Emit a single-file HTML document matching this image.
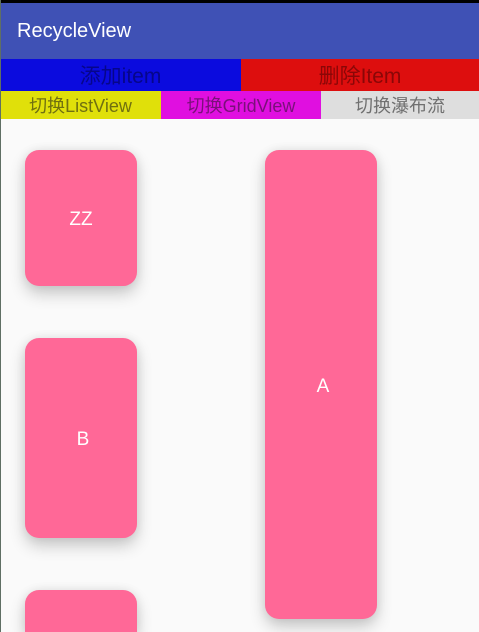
<!DOCTYPE html>
<html><head><meta charset="utf-8"><style>
*{margin:0;padding:0;box-sizing:border-box}
html{width:479px;height:632px;overflow:hidden}
body{width:479px;height:632px;overflow:hidden;background:#FAFAFA;position:relative;font-family:"Liberation Sans","Noto Sans CJK SC",sans-serif}
.a{position:absolute}
.c{position:absolute;background:#FF6897;border-radius:14px;box-shadow:0 8px 16px rgba(0,0,0,0.2),0 0 10px rgba(0,0,0,0.08);color:#fff;font-size:19px;display:flex;align-items:center;justify-content:center;padding-top:4px}
.b{position:absolute;display:flex;align-items:center;justify-content:center}
</style></head><body>
<div class="a" style="left:0;top:0;width:479px;height:3px;background:#000"></div>
<div class="a" style="left:0;top:3px;width:479px;height:56px;background:#3F51B5;box-shadow:0 2px 3px rgba(0,0,0,0.3)"></div>
<div class="a" style="left:17px;top:20px;color:#fff;font-size:20px">RecycleView</div>
<div class="b" style="left:0;top:59px;width:241px;height:32px;background:#0B0BDE;color:#06068a;font-size:21px">添加item</div>
<div class="b" style="left:241px;top:59px;width:238px;height:32px;background:#DD0E0E;color:#8a0707;font-size:21px">删除Item</div>
<div class="b" style="left:0;top:91px;width:161px;height:28px;background:#E0E00A;color:#707010;font-size:18px">切换ListView</div>
<div class="b" style="left:161px;top:91px;width:160px;height:28px;background:#E00FE0;color:#7a107a;font-size:18px">切换GridView</div>
<div class="b" style="left:321px;top:91px;width:158px;height:28px;background:#DEDEDE;color:#707070;font-size:18px">切换瀑布流</div>
<div class="c" style="left:25px;top:150px;width:112px;height:136px">ZZ</div>
<div class="c" style="left:25px;top:338px;width:112px;height:200px;padding-left:4px">B</div>
<div class="c" style="left:25px;top:590px;width:112px;height:42px;border-radius:14px 14px 0 0"></div>
<div class="c" style="left:265px;top:150px;width:112px;height:469px;padding-left:4px">A</div>
<div class="a" style="left:0;top:0;width:1px;height:632px;background:#5f6f64"></div>
</body></html>
